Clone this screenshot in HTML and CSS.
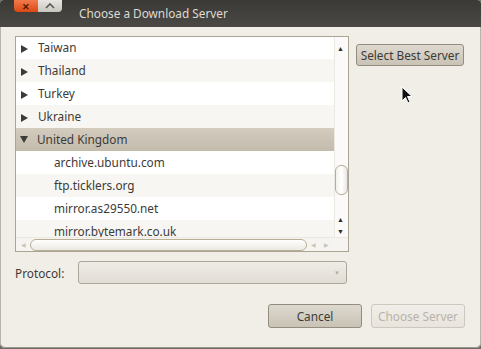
FILE: index.html
```html
<!DOCTYPE html>
<html lang="en">
<head>
    <meta charset="UTF-8">
    <title>Choose a Download Server</title>
    <link rel="stylesheet" href="styles.css">
</head>
<body>
<div class="window">
    <div class="titlebar">
        <div class="wm-buttons">
            <span class="wm-close">&#x2715;</span>
            <span class="wm-min">
                <svg width="12" height="8" viewBox="0 0 12 8"><path d="M2 6 L6 2 L10 6" fill="none" stroke="#5b5a55" stroke-width="1.6"/></svg>
            </span>
        </div>
        <div class="title">Choose a Download Server</div>
    </div>

    <div class="content">
        <div class="top-row">
            <div class="list">
                <div class="list-main">
                    <div class="tree">
                        <div class="rows">
                            <div class="row"><span class="exp"></span>Taiwan</div>
                            <div class="row alt"><span class="exp"></span>Thailand</div>
                            <div class="row"><span class="exp"></span>Turkey</div>
                            <div class="row alt"><span class="exp"></span>Ukraine</div>
                            <div class="row selected"><span class="exp open"></span>United Kingdom</div>
                            <div class="row child">archive.ubuntu.com</div>
                            <div class="row child alt">ftp.ticklers.org</div>
                            <div class="row child">mirror.as29550.net</div>
                            <div class="row child alt">mirror.bytemark.co.uk</div>
                        </div>
                    </div>
                    <div class="vscroll">
                        <span class="arrow up">&#9650;</span>
                        <span class="vthumb"></span>
                        <span class="arrow down-up">&#9650;</span>
                        <span class="arrow down">&#9660;</span>
                    </div>
                </div>
                <div class="hscroll">
                    <span class="harrow">&#9664;</span>
                    <span class="hthumb"></span>
                    <span class="harrow">&#9664;</span>
                    <span class="harrow">&#9654;</span>
                </div>
            </div>
            <div class="side">
                <button class="btn btn-focus">Select Best Server</button>
            </div>
        </div>

        <div class="protocol-row">
            <label>Protocol:</label>
            <div class="combo"><span class="combo-arrow">&#9660;</span></div>
        </div>

        <div class="actions">
            <button class="btn btn-action">Cancel</button>
            <button class="btn btn-action" disabled>Choose Server</button>
        </div>
    </div>

    <svg class="cursor" width="12" height="19" viewBox="0 0 12 19">
        <path d="M1 1 L1 15 L4.5 11.5 L7 17 L9 16 L6.5 10.5 L11 10.5 Z" fill="#111" stroke="#fff" stroke-width="1"/>
    </svg>
</div>
</body>
</html>
```

FILE: styles.css
```css
body {
    margin: 0;
    padding: 0;
    background-color: #6b6a66;
    font-family: "Noto Sans", "Open Sans", sans-serif;
    font-size: 11.8px;
    color: #3c3b37;
}
.window {
    position: relative;
    width: 481px;
    height: 348px;
    background-color: #f1eee8;
    border-radius: 4px 4px 5px 5px;
    overflow: hidden;
    box-shadow: inset 0 -1px 0 #9d988c, inset 1px 0 0 #b9b4a9, inset -1px 0 0 #b9b4a9;
}

/* Barra de título */
.titlebar {
    height: 27px;
    background: linear-gradient(#3a3935, #4a4945);
    display: flex;
    align-items: flex-start;
}
.wm-buttons {
    display: flex;
    margin-left: 14px;
}
.wm-close, .wm-min {
    width: 24px;
    height: 12px;
    display: flex;
    align-items: center;
    justify-content: center;
}
.wm-close {
    background: linear-gradient(#f27a4b, #dd4814);
    color: #4a1a08;
    font-size: 9px;
    font-weight: bold;
    border-radius: 0 0 0 4px;
}
.wm-min {
    background: linear-gradient(#e8e6e1, #c8c5bd);
    border-radius: 0 0 4px 0;
}
.title {
    margin-left: 17px;
    margin-top: 5px;
    color: #dfdbd2;
    font-size: 11.8px;
}

.content {
    padding: 9px 16px 0 15px;
}
.top-row {
    display: flex;
    gap: 7px;
}

/* Lista */
.list {
    width: 332px;
    height: 214px;
    border: 1px solid #aaa496;
    background-color: #fff;
    display: flex;
    flex-direction: column;
}
.list-main {
    display: flex;
    flex: 1;
    min-height: 0;
}
.tree {
    flex: 1;
    overflow: hidden;
}
.rows {
    margin-top: -1px;
}
.row {
    height: 23px;
    line-height: 23px;
    padding-left: 4px;
    background-color: #fff;
    white-space: nowrap;
}
.row.alt {
    background-color: #f7f6f3;
}
.row.selected {
    background: linear-gradient(#d3ccbf, #c3bbac);
}
.row.child {
    padding-left: 38px;
}
.exp {
    display: inline-block;
    width: 0;
    height: 0;
    border-left: 7px solid #3c3b37;
    border-top: 4px solid transparent;
    border-bottom: 4px solid transparent;
    margin: 0 10px 0 1px;
    vertical-align: -1px;
}
.exp.open {
    border-left: 4px solid transparent;
    border-right: 4px solid transparent;
    border-top: 7px solid #3c3b37;
    border-bottom: 0;
    margin: 0 9px 0 0;
    vertical-align: 1px;
}
.vscroll {
    width: 13px;
    border-left: 1px solid #ece9e3;
    background-color: #fbfaf8;
    position: relative;
}
.arrow {
    position: absolute;
    left: 2px;
    font-size: 7px;
    color: #2d2c29;
}
.arrow.up { top: 7px; }
.arrow.down-up { top: 178px; }
.arrow.down { top: 190px; }
.vthumb {
    position: absolute;
    left: 0;
    top: 128px;
    width: 11px;
    height: 28px;
    border: 1px solid #b7ae93;
    border-radius: 6px;
    background: linear-gradient(90deg, #f3f1ec, #fff, #eae7e1);
}
.hscroll {
    height: 13px;
    border-top: 1px solid #ece9e3;
    background-color: #f6f4f0;
    display: flex;
    align-items: center;
    padding-left: 5px;
}
.harrow {
    font-size: 6px;
    color: #c9c5bb;
    width: 13px;
}
.hthumb {
    width: 275px;
    height: 10px;
    border: 1px solid #b7ae93;
    border-radius: 6px;
    background: linear-gradient(#fff, #edeae4);
    margin: 0 4px 0 -4px;
}

/* Botones */
.btn {
    font-family: "Noto Sans", "Open Sans", sans-serif;
    font-size: 11.8px;
    color: #3c3b37;
    border: 1px solid #938d80;
    border-radius: 3px;
    background: linear-gradient(#ded9d0, #c9c2b5);
    padding: 0;
}
.btn-focus {
    margin-top: 8px;
    width: 108px;
    height: 22px;
}
.btn-action {
    width: 94px;
    height: 24px;
}
.btn:disabled {
    color: #b8b3a9;
    border-color: #cdc8be;
    background: linear-gradient(#f1eee9, #e8e4dd);
}

.protocol-row {
    display: flex;
    align-items: center;
    margin-top: 9px;
}
.protocol-row label {
    width: 63px;
}
.combo {
    width: 267px;
    height: 21px;
    border: 1px solid #aca699;
    border-radius: 3px;
    background: linear-gradient(#efece6, #e1ddd5);
    display: flex;
    align-items: center;
    justify-content: flex-end;
}
.combo-arrow {
    font-size: 6px;
    color: #b3aea3;
    margin-right: 6px;
}

.actions {
    display: flex;
    justify-content: flex-end;
    gap: 9px;
    margin-top: 20px;
}

.cursor {
    position: absolute;
    left: 401px;
    top: 86px;
}
```
